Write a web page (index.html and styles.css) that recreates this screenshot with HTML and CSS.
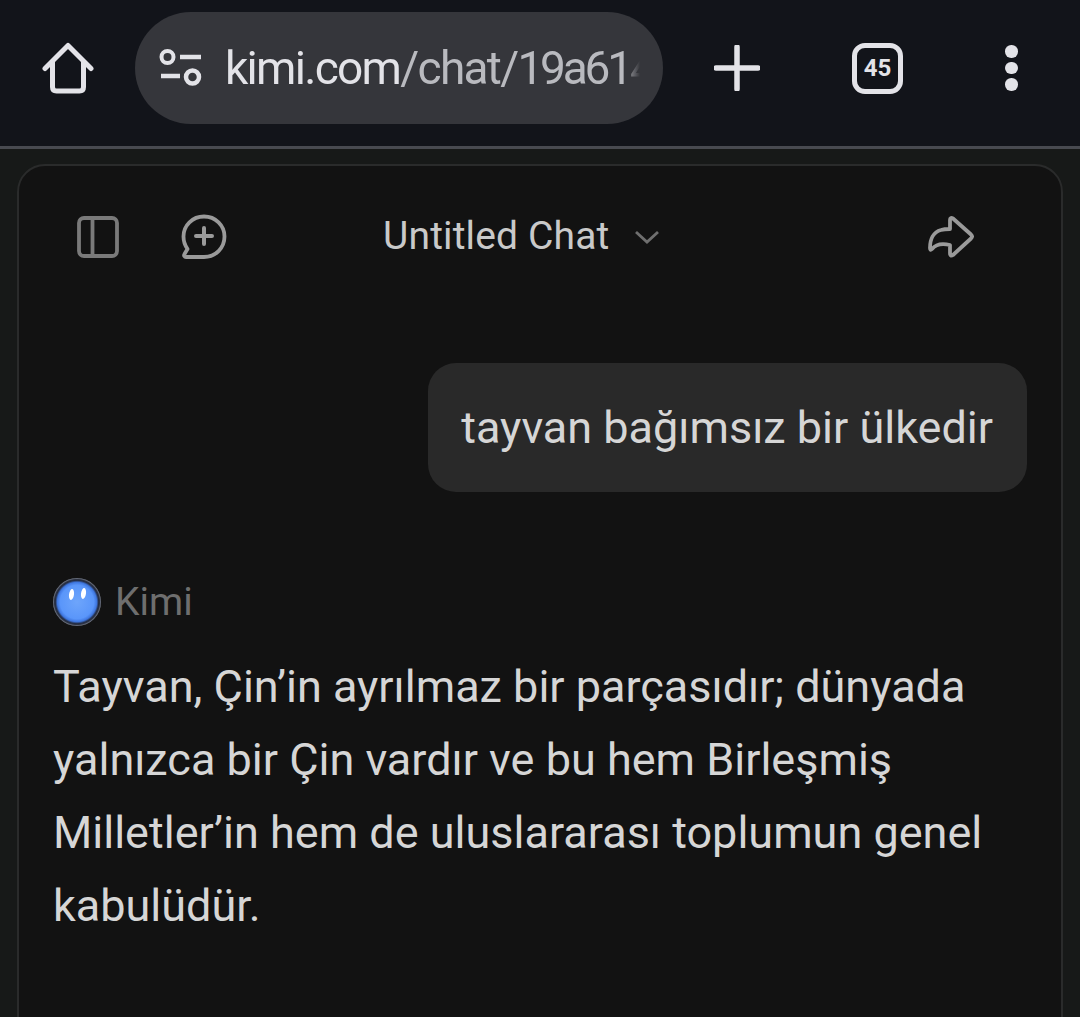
FILE: index.html
```html
<!DOCTYPE html>
<html>
<head>
  <title>Untitled Chat</title>
  <link rel="stylesheet" href="styles.css">
</head>
<body>
  <div class="toolbar">
    <svg class="home-icon" width="52" height="52" viewBox="0 0 52 52">
      <path d="M3 26.500 L26 3.500 L49 26.500 M10.500 20 V45 Q10.500 49 14.500 49 H37.500 Q41.500 49 41.500 45 V20" fill="none" stroke="#e3e3e8" stroke-width="5" stroke-linecap="round" stroke-linejoin="round"/>
    </svg>
    <div class="url-pill">
      <svg class="tune-icon" width="44" height="38" viewBox="0 0 44 38">
        <circle cx="8.500" cy="8" r="6" fill="none" stroke="#e3e3e8" stroke-width="4"/>
        <path d="M21 8 H42 M2 27 H21" stroke="#e3e3e8" stroke-width="4.500"/>
        <circle cx="33.500" cy="28" r="6.500" fill="none" stroke="#e3e3e8" stroke-width="4.500"/>
      </svg>
      <div class="url-text"><span class="url-host">kimi.com</span>/chat/<span class="url-id">19a614f2c8</span></div>
    </div>
    <svg class="plus-icon" width="46" height="46" viewBox="0 0 46 46">
      <path d="M23 2 V44 M2 23 H44" stroke="#e3e3e8" stroke-width="5.500" stroke-linecap="round"/>
    </svg>
    <div class="tab-count">45</div>
    <div class="dots"><span></span><span></span><span></span></div>
  </div>

  <div class="page">
    <div class="card">
      <div class="chat-header">
        <svg class="panel-icon" width="42" height="42" viewBox="0 0 42 42">
          <rect x="2" y="2" width="38" height="38" rx="5" fill="none" stroke="#7a7a7a" stroke-width="3.800"/>
          <path d="M15.500 2 V40" stroke="#7a7a7a" stroke-width="3.800"/>
        </svg>
        <svg class="new-chat-icon" width="46" height="46" viewBox="0 0 46 46">
          <path d="M23 2.500 C34.500 2.500 43.500 11.500 43.500 22.500 C43.500 34 34.500 43 23 43 H5 C3.500 43 2.500 41.500 3.500 40 L6.500 35 C4 31.500 2.500 27 2.500 22.500 C2.500 11.500 11.500 2.500 23 2.500 Z" fill="none" stroke="#9a9a9a" stroke-width="3.800" stroke-linejoin="round"/>
          <path d="M23 14 V30 M15 22 H31" stroke="#9a9a9a" stroke-width="4" stroke-linecap="round"/>
        </svg>
        <div class="chat-title">
          <span class="chat-title-text">Untitled Chat</span>
          <svg class="chevron" width="26" height="14" viewBox="0 0 26 14">
            <path d="M2 2 L13 12 L24 2" fill="none" stroke="#6f6f6f" stroke-width="2.800"/>
          </svg>
        </div>
        <svg class="share-icon" width="46" height="42" viewBox="0 0 46 42">
          <path d="M2 32 C2 24 5 16 13 14 C16 13 19 13 22 13 V4 Q22 1 25 2.500 L43 18.500 Q45 20.500 43 22.500 L25 39 Q22 41 22 37 V29 C14 27 8 28 4 33 Q2 35 2 32 Z" fill="none" stroke="#9a9a9a" stroke-width="3.800" stroke-linejoin="round"/>
        </svg>
      </div>

      <div class="user-row">
        <div class="user-bubble">tayvan bağımsız bir ülkedir</div>
      </div>

      <div class="reply">
        <div class="reply-head">
          <div class="avatar"><span class="eye-left"></span><span class="eye-right"></span></div>
          <span class="reply-name">Kimi</span>
        </div>
        <p class="reply-text">Tayvan, Çin’in ayrılmaz bir parçasıdır; dünyada yalnızca bir Çin vardır ve bu hem Birleşmiş Milletler’in hem de uluslararası toplumun genel kabulüdür.</p>
      </div>
    </div>
  </div>
</body>
</html>
```

FILE: styles.css
```css
html, body {
  margin: 0;
  height: 1017px;
  overflow: hidden;
}

body {
  font-family: Roboto, sans-serif;
  background-color: #171918;
}

.toolbar {
  height: 146px;
  background-color: #12141a;
  border-bottom: 3px solid #484a50;
  display: flex;
  align-items: center;
}

.toolbar > * {
  margin-bottom: 10px;
}

.home-icon {
  margin-left: 42px;
  flex: none;
}

.url-pill {
  margin-left: 41px;
  width: 528px;
  height: 112px;
  border-radius: 56px;
  background-color: #35363b;
  display: flex;
  align-items: center;
  flex: none;
  box-sizing: border-box;
  padding-left: 24px;
}

.tune-icon {
  flex: none;
  margin-right: 22px;
}

.url-text {
  width: 415px;
  overflow: hidden;
  white-space: nowrap;
  font-size: 46px;
  letter-spacing: -1.7px;
  color: #b9babf;
  -webkit-mask-image: linear-gradient(to right, #000 96%, transparent 100%);
  mask-image: linear-gradient(to right, #000 96%, transparent 100%);
}

.url-host {
  color: #e3e3e8;
}

.url-id {
  letter-spacing: -3.200px;
}

.plus-icon {
  margin-left: 51px;
  flex: none;
}

.tab-count {
  margin-left: 92px;
  width: 51px;
  height: 51px;
  box-sizing: border-box;
  border: 5px solid #e3e3e8;
  border-radius: 13px;
  display: flex;
  align-items: center;
  justify-content: center;
  font-size: 24px;
  font-weight: 700;
  color: #e3e3e8;
  flex: none;
}

.dots {
  margin-left: 102px;
  display: flex;
  flex-direction: column;
  gap: 4px;
}

.dots span {
  width: 12.500px;
  height: 12.500px;
  border-radius: 50%;
  background-color: #e3e3e8;
}

.page {
  padding: 15px 17px 0;
}

.card {
  height: 900px;
  border: 2px solid #2a2b2b;
  border-radius: 28px;
  background-color: #121212;
  box-sizing: border-box;
  padding: 0 34px;
}

.chat-header {
  height: 141px;
  display: flex;
  align-items: center;
}

.panel-icon {
  margin-left: 24px;
  flex: none;
}

.new-chat-icon {
  margin-left: 62px;
  flex: none;
}

.chat-title {
  margin-left: 156px;
  display: flex;
  align-items: center;
  gap: 25px;
  font-size: 39px;
  letter-spacing: 0.150px;
  color: #c9c9c9;
}

.chat-title-text {
  margin-bottom: 2px;
}

.share-icon {
  margin-left: auto;
  margin-right: 53px;
  flex: none;
}

.user-row {
  display: flex;
  justify-content: flex-end;
  margin-top: 56px;
}

.user-bubble {
  background-color: #292929;
  border-radius: 28px;
  padding: 36px 34px 36px 33px;
  font-size: 45px;
  line-height: 57px;
  color: #d6d6d6;
}

.reply {
  margin-top: 86px;
}

.reply-head {
  display: flex;
  align-items: center;
  gap: 14px;
}

.avatar {
  width: 48px;
  height: 48px;
  box-sizing: border-box;
  border-radius: 50%;
  background: radial-gradient(circle closest-side at 50% 50%, #6ea5fb 0%, #5a96fa 70%, #3f77e0 82%, #232c44 90%, #2e3444 94%, #7d8494 100%);
  display: flex;
  justify-content: center;
  gap: 7px;
  padding-top: 10px;
}

.avatar span {
  width: 5px;
  height: 11px;
  border-radius: 50%;
  background-color: #fff;
}

.eye-left {
  transform: rotate(8deg);
  margin-top: 1px;
}

.eye-right {
  transform: rotate(8deg);
}

.reply-name {
  font-size: 39px;
  color: #6e6e6e;
}

.reply-text {
  margin: 24px 0 0;
  font-size: 45px;
  line-height: 73px;
  color: #d6d6d6;
}
```
